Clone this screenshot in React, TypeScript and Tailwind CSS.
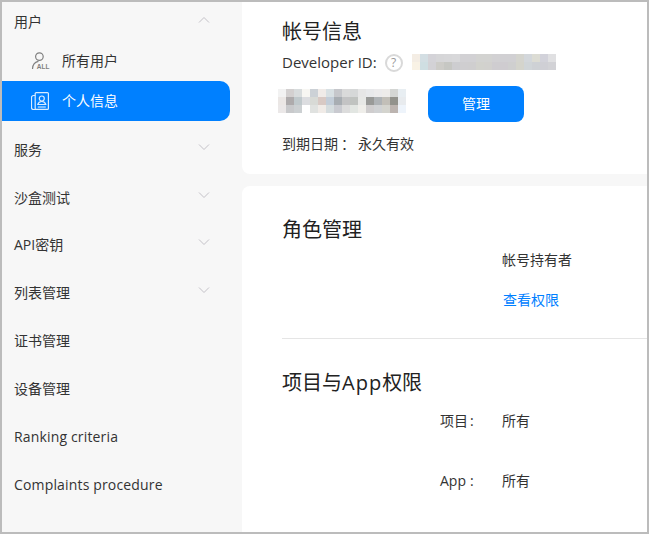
const FONT = "font-['Open_Sans','Noto_Sans_CJK_SC',sans-serif]";

const idCells = [
  "#f4ede4","#d3dee3","#d4d3d8","#d6d6d8","#d7d7d9","#d8d8da","#d2d1d4","#d2d1d4","#d3d3d1","#d3d3d1","#d2d1d3","#d1d0d3","#d1d0d3","#d4d4ce","#d3d7db","#dcdcd4","#d2d2da","#e0e0e2",
  "#f9f2e5","#cfdee2","#d3d2d6","#cdccc8","#c6c7c3","#cdcdd0","#cfced0","#cfcecf","#d2d2cd","#d2d1ce","#cfcdd0","#cfccd0","#cfcfcf","#d4d4cc","#d0d5d8","#ced1d5","#cfcfd5","#d2d2d6",
];
const nameCells = [
  "#f2f2f2","#d3d0d0","#d8dcdd","#f7f6f2","#ccd1d6","#f0ebe8","#d8e0e3","#c6c7cb","#dadada","#d6d8d8","#e6e6e6","#e8e9eb","#ecebec","#eeecea","#d4d6d4","#e8eef2",
  "#ebe7e5","#aeabac","#c0c9cc","#dcdde0","#d8dad6","#d8c9c4","#c3cdd8","#a8adb2","#c3c3c4","#c0c3c0","#e7e8e6","#999a98","#afb3b6","#c2bfb8","#92928c","#e8ebee",
  "#ebe8e8","#c8c9cb","#ccd0d2","#ffffff","#e0e2e0","#f0ebe7","#d5dcde","#c9cad0","#dcdcdc","#e2e6e2","#efeeea","#cfcdce","#d0d2d4","#d4d4ce","#bcb4b0","#eef4fb",
];

function Chevron({ up }: { up?: boolean }) {
  return (
    <svg width="12" height="8" viewBox="0 0 12 8" fill="none" stroke="#c4c2c8" strokeWidth="1">
      <path d={up ? "M1 6.5 6 1.5l5 5" : "M1 1.5l5 5 5-5"} />
    </svg>
  );
}

function NavItem({ label, chevron, latin, h = "h-12" }: { label: string; chevron?: boolean; latin?: boolean; h?: string }) {
  return (
    <div className={`flex ${h} items-center justify-between pl-3 pr-[32px] text-[14px] text-[#333] ${latin ? "tracking-[0.16px]" : ""}`}>
      <span>{label}</span>
      {chevron && <span className="-mt-[5px] flex"><Chevron /></span>}
    </div>
  );
}

export default function App() {
  return (
    <div className={`${FONT} box-border flex h-[534px] w-[649px] overflow-hidden border-2 border-[#bcbcbc] bg-[#f7f7f7] text-[#333]`}>
      <aside className="flex w-[240px] shrink-0 flex-col">
        <div className="flex h-[39px] items-center justify-between pl-3 pr-[32px] text-[14px]">
          <span>用户</span>
          <span className="-mt-1 flex"><Chevron up /></span>
        </div>
        <div className="flex h-10 items-center gap-[11px] pl-[29px] text-[14px]">
          <svg width="20" height="20" viewBox="0 0 20 20" fill="none" stroke="#808080" strokeWidth="1.2">
            <circle cx="8.4" cy="5.6" r="3.8" />
            <path d="M1.5 18c0-4.2 2.6-7.3 6-7.6" />
            <text x="5.8" y="18" fontSize="8" fontWeight="700" fill="#808080" stroke="none" fontFamily="Liberation Sans" textLength="12.6" lengthAdjust="spacingAndGlyphs">ALL</text>
          </svg>
          <span className="-mt-[2px]">所有用户</span>
        </div>
        <div className="mr-3 flex h-10 items-center gap-[13px] rounded-r-[10px] bg-[#0080ff] pl-[29px] text-[14px] text-white">
          <svg width="18" height="18" viewBox="0 0 18 18" fill="none" stroke="#d9ecff" strokeWidth="1.2">
            <rect x="4.2" y="0.6" width="13.2" height="16.8" rx="1" />
            <path d="M4.2 3.5h-1.7a2 2 0 0 0-2 2v10a2 2 0 0 0 2 2h3" />
            <circle cx="10.8" cy="6.5" r="2.5" />
            <path d="M6.8 12.5c.5-2 2-3 4-3s3.5 1 4 3z" />
            <path d="M6.8 15h8" stroke="#9fd0ff" strokeWidth="1.5" />
          </svg>
          <span className="-mt-[2px]">个人信息</span>
        </div>
        <div className="mt-1 flex flex-col">
          <NavItem label="服务" chevron />
          <NavItem label="沙盒测试" chevron />
          <NavItem label="API密钥" chevron h="h-[47px]" />
          <NavItem label="列表管理" chevron h="h-[49px]" />
          <NavItem label="证书管理" h="h-[47px]" />
          <NavItem label="设备管理" />
          <NavItem label="Ranking criteria" latin />
          <NavItem label="Complaints procedure" latin />
        </div>
      </aside>
      <main className="flex min-w-0 flex-1 flex-col gap-3">
        <section className="h-[172px] shrink-0 rounded-bl-lg bg-white pl-10 pt-[17px]">
          <h1 className="text-[20px] leading-[26px] font-normal text-[#222]">帐号信息</h1>
          <div className="mt-[5px] flex h-6 items-center text-[15px]">
            <span>Developer ID:</span>
            <span className="ml-2 mt-[2px] flex size-[18px] items-center justify-center rounded-full border-2 border-[#d9d9d9] text-[12px] leading-none text-[#999]">?</span>
            <div className="ml-[9px] grid grid-cols-[repeat(18,8px)] grid-rows-[repeat(2,8px)]">
              {idCells.map((c, i) => <span key={i} style={{ backgroundColor: c }} />)}
            </div>
          </div>
          <div className="-ml-1 mt-3 flex items-start">
            <div className="mt-[3px] grid grid-cols-[repeat(16,8px)] grid-rows-[repeat(3,8px)]">
              {nameCells.map((c, i) => <span key={i} style={{ backgroundColor: c }} />)}
            </div>
            <button className="ml-[22px] h-9 w-24 rounded-lg bg-[#0080ff] pb-[2px] text-[14px] text-white">管理</button>
          </div>
          <div className="mt-[11px] flex h-5 items-center text-[14px]">
            <span className="w-[76px]">到期日期<span className="ml-[3px]">：</span></span>
            <span>永久有效</span>
          </div>
        </section>
        <section className="flex-1 rounded-tl-lg bg-white pl-10">
          <h2 className="pt-[31px] text-[20px] leading-[26px] font-normal text-[#222]">角色管理</h2>
          <div className="mt-[7px] pl-[220px] text-[14px] leading-5">帐号持有者</div>
          <div className="mt-5 pl-[221px] text-[14px] leading-5 text-[#0080ff]">查看权限</div>
          <div className="mt-[28px] h-px bg-[#e5e5e5]" />
          <h2 className="mt-[31px] text-[20px] leading-[26px] font-normal text-[#222]">项目与<span className="tracking-[1px]">App</span>权限</h2>
          <div className="mt-[14px] flex h-5 items-center pl-[158px] text-[14px]">
            <span className="w-[28px]">项目</span>
            <span className="ml-[2px] w-[32px]">:</span>
            <span>所有</span>
          </div>
          <div className="mt-10 flex h-5 items-center pl-[158px] text-[14px]">
            <span className="w-[28px]">App</span>
            <span className="ml-[2px] w-[32px]">:</span>
            <span>所有</span>
          </div>
        </section>
      </main>
    </div>
  );
}
